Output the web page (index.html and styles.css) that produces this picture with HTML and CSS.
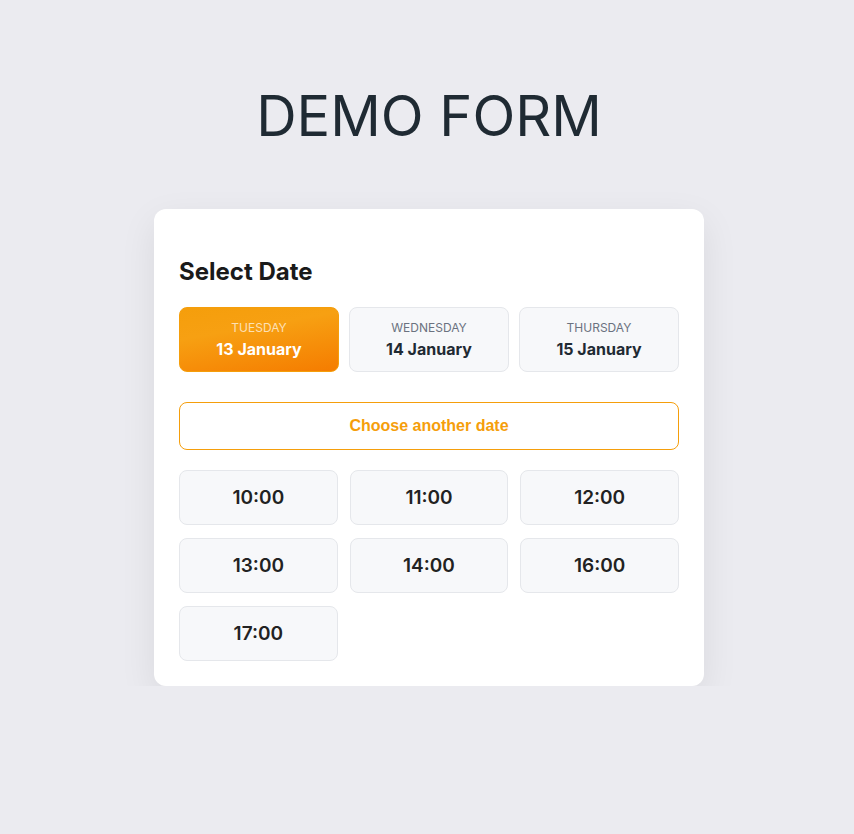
FILE: index.html
```html
<!DOCTYPE html>
<html lang="en">

<head>
    <meta charset="UTF-8">
    <meta name="viewport" content="width=device-width, initial-scale=1.0">
    <title>Demo Form</title>
    <link rel="stylesheet" href="styles.css">
</head>

<body>
    <h1 class="page-title">DEMO FORM</h1>

    <div class="card">
        <h2 class="card-title">Select Date</h2>

        <div class="date-grid">
            <button class="date-btn selected">
                <span class="date-day">TUESDAY</span>
                <span class="date-label">13 January</span>
            </button>
            <button class="date-btn">
                <span class="date-day">WEDNESDAY</span>
                <span class="date-label">14 January</span>
            </button>
            <button class="date-btn">
                <span class="date-day">THURSDAY</span>
                <span class="date-label">15 January</span>
            </button>
        </div>

        <button class="other-date">Choose another date</button>

        <div class="time-grid">
            <button class="time-btn">10:00</button>
            <button class="time-btn">11:00</button>
            <button class="time-btn">12:00</button>
            <button class="time-btn">13:00</button>
            <button class="time-btn">14:00</button>
            <button class="time-btn">16:00</button>
            <button class="time-btn">17:00</button>
        </div>
    </div>
</body>

</html>
```

FILE: styles.css
```css
body {
    font-family: Inter, "Noto Sans", sans-serif;
    margin: 0;
    padding: 0 0 0 4px;
    background-color: #ebebf0;
    color: #1f2a33;
}

.page-title {
    margin: 0;
    padding-top: 82px;
    font-size: 56px;
    font-weight: 400;
    line-height: 68px;
    text-align: center;
    color: #1f2a33;
}

.card {
    width: 500px;
    margin: 59px auto 0;
    padding: 25px;
    background: white;
    border-radius: 12px;
    box-shadow: 0 12px 36px rgba(0, 0, 0, 0.08);
}

.card-title {
    margin: 24px 0 21px;
    font-size: 24px;
    font-weight: 700;
    line-height: 28px;
    color: #1a1a1a;
}

.date-grid {
    display: grid;
    grid-template-columns: repeat(3, 1fr);
    gap: 10px;
}

.date-btn {
    display: flex;
    flex-direction: column;
    align-items: center;
    justify-content: center;
    gap: 4px;
    height: 65px;
    padding-bottom: 2px;
    background: #f7f8fa;
    border: 1px solid #e5e7eb;
    border-radius: 8px;
    font-family: Inter, sans-serif;
    cursor: pointer;
}

.date-day {
    font-size: 12px;
    color: #6b7280;
}

.date-label {
    font-size: 16px;
    font-weight: 700;
    color: #1f2a33;
}

.date-btn.selected {
    background: linear-gradient(170deg, #f59e0b 0%, #f7a012 35%, #f57c00 100%);
    border-color: #f59e0b;
}

.date-btn.selected .date-day {
    color: rgba(255, 255, 255, 0.7);
}

.date-btn.selected .date-label {
    color: white;
}

.other-date {
    display: block;
    width: 100%;
    height: 48px;
    margin-top: 30px;
    background: white;
    border: 1px solid #f59e0b;
    border-radius: 8px;
    font-family: "Liberation Sans", Arial, sans-serif;
    font-size: 16px;
    font-weight: 700;
    color: #f59e0b;
    cursor: pointer;
}

.time-grid {
    display: grid;
    grid-template-columns: repeat(3, 1fr);
    gap: 13px 12px;
    margin-top: 20px;
}

.time-btn {
    height: 55px;
    background: #f7f8fa;
    border: 1px solid #e5e7eb;
    border-radius: 8px;
    font-family: Inter, sans-serif;
    font-size: 19px;
    font-weight: 600;
    color: #222;
    cursor: pointer;
}
```
